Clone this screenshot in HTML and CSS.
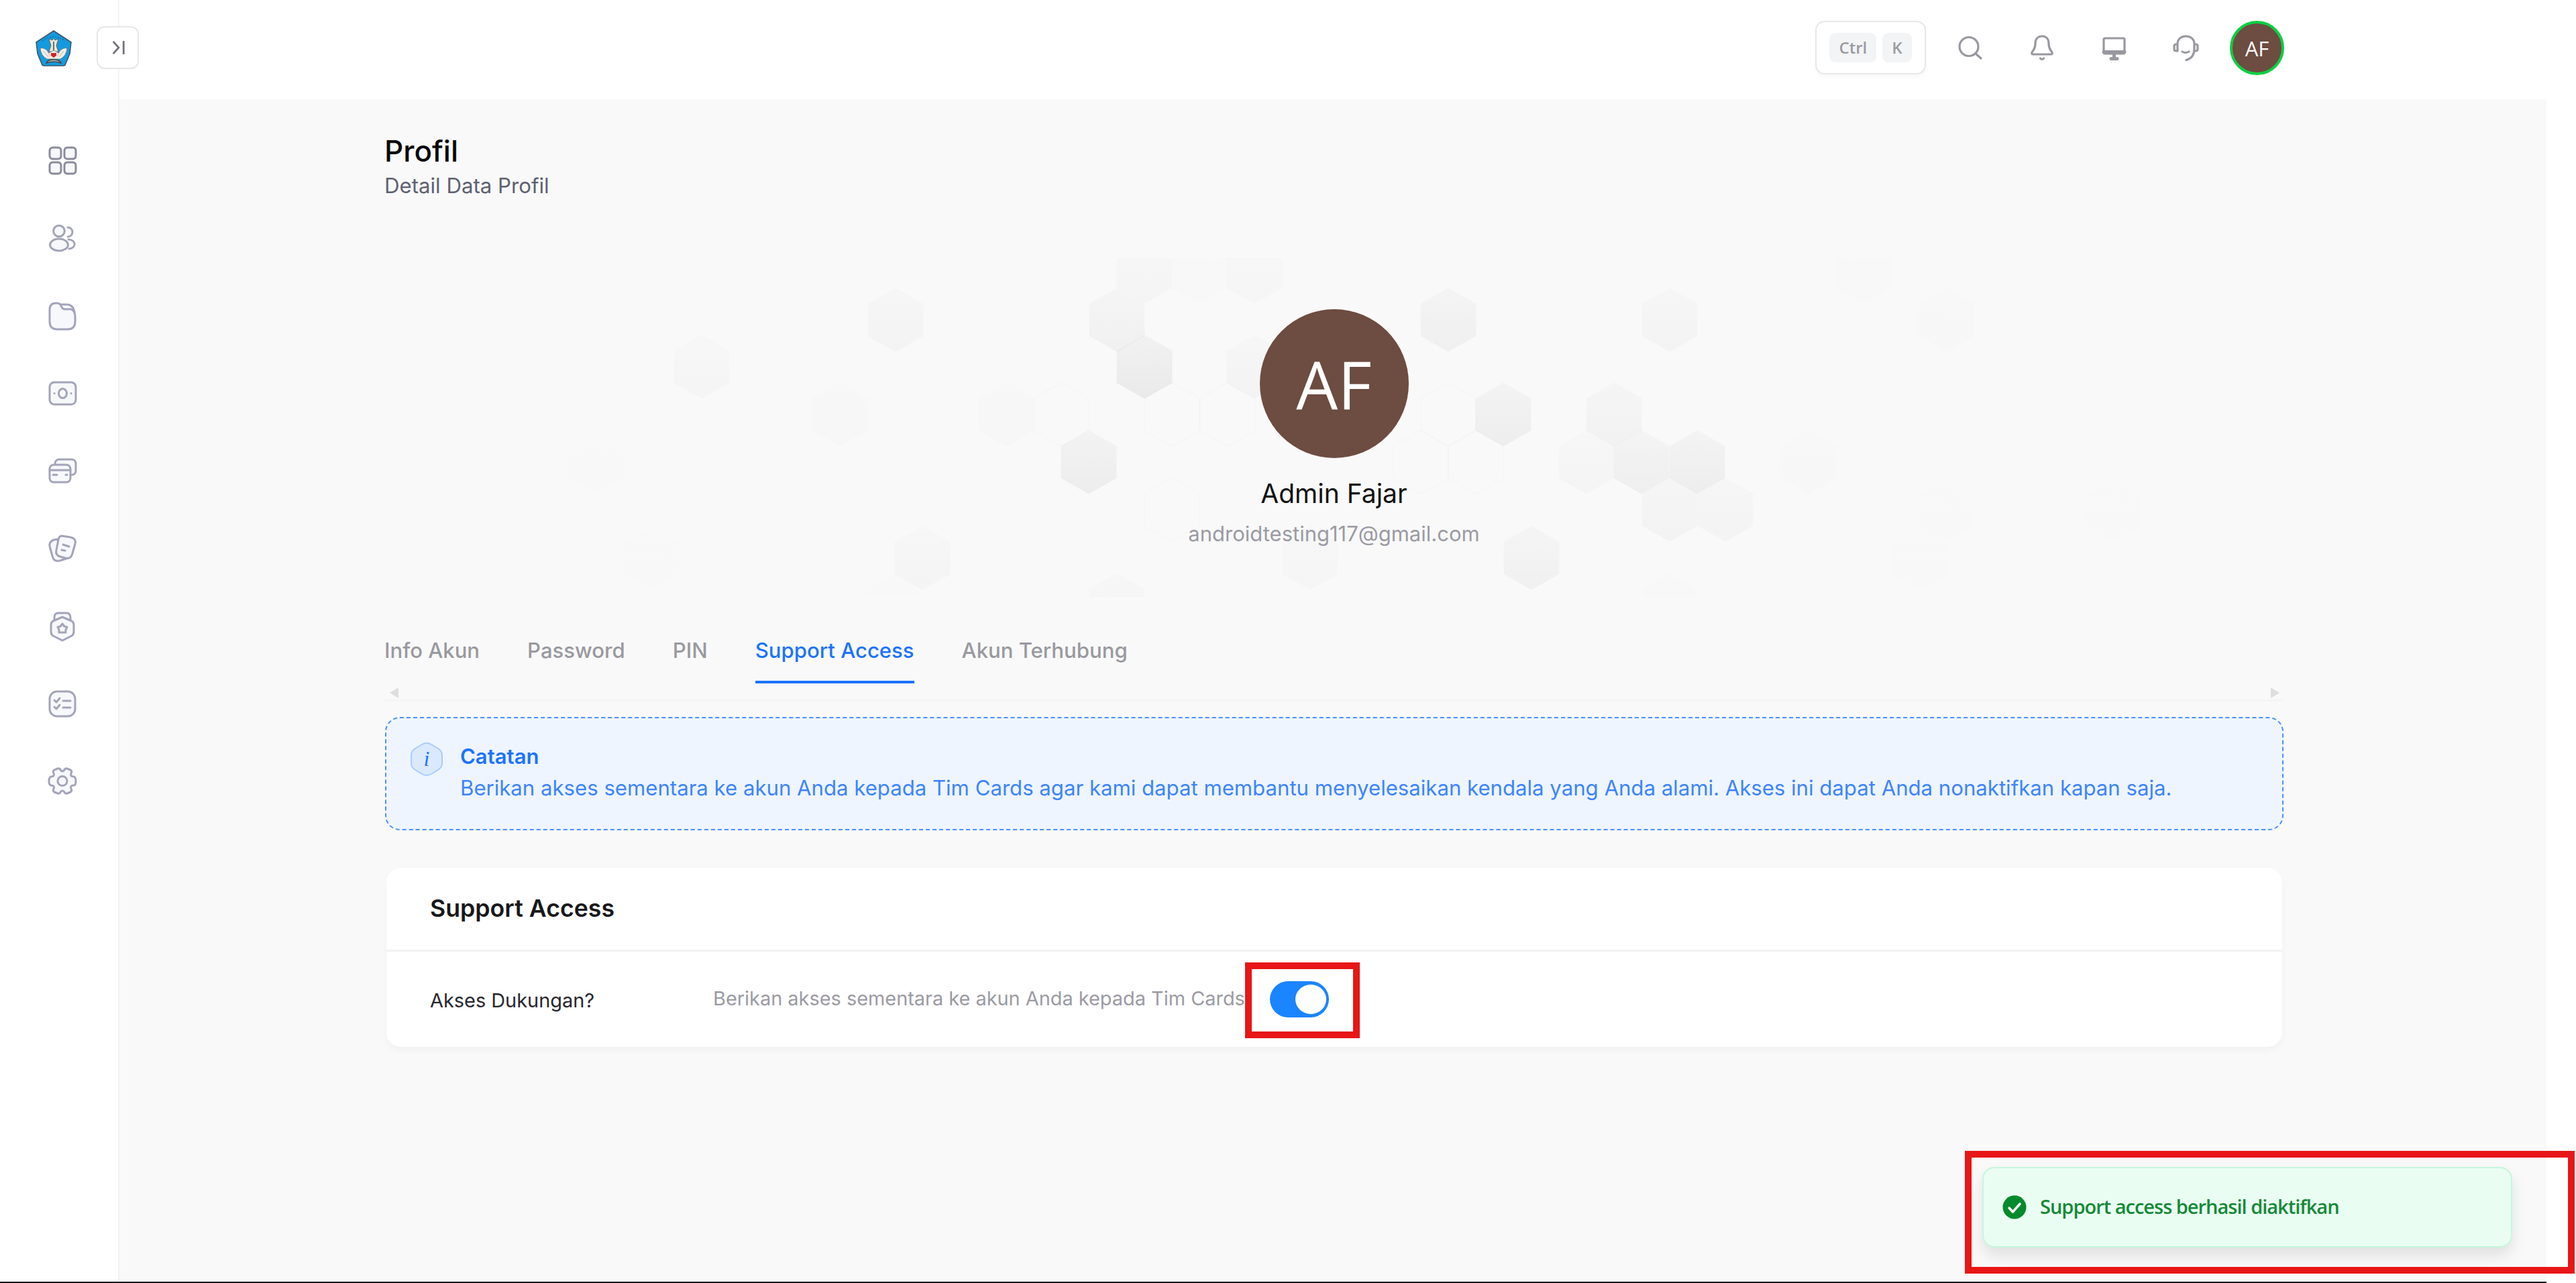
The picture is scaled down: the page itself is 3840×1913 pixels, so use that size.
FILE: index.html
```html
<!DOCTYPE html>
<html lang="id"><head><meta charset="utf-8"><title>Profil</title><link rel="stylesheet" href="styles.css"></head>
<body>
<div class="app">
<aside class="sidebar">
<div class="brand">
<svg class="logo" viewBox="0 0 54 54"><path d="M27 1 53 18 51 35 44 52Q43 53 41 53H13Q11 53 10 52L3 35 1 18Z" fill="#139bdf" stroke="#3c5668" stroke-width="1.6"/><path d="M10 16Q27 4 44 16" fill="none" stroke="#126b9e" stroke-width="1.500" stroke-dasharray="2 2"/><path d="M20 13 25 15 27 12 29 15 34 13 31 23 34 32 20 32 23 23Z" fill="#ece6d8" stroke="#555" stroke-width=".8"/><path d="M27 17V32" stroke="#444" stroke-width="1.500"/><path d="M7 27Q14 25 20 34L27 30 34 34Q40 25 47 27 46 38 37 43H17Q8 38 7 27Z" fill="#f1eee6" stroke="#777" stroke-width=".8"/><path d="M12 31 19 40M16 29 22 39M42 31 35 40M38 29 32 39" stroke="#aaa" stroke-width=".8"/><path d="M16 49Q18 44 27 44T38 49Q27 45 16 49Z" stroke="#444" fill="#b5c2c8" stroke-width="1.500"/><path d="M23 34H31V38L27 41 23 38Z" fill="#cf2429"/></svg>
</div>
<nav class="menu">
<a><svg viewBox="0 0 42 42" class="ico dark"><rect x="2" y="2" width="17" height="17" rx="4.500"/><rect x="24" y="2" width="17" height="17" rx="4.500"/><rect x="2" y="24" width="17" height="17" rx="4.500"/><rect x="24" y="24" width="17" height="17" rx="4.500"/></svg></a>
<a><svg viewBox="0 0 42 42" class="ico"><circle cx="16" cy="10.500" r="8.300"/><ellipse cx="16" cy="31" rx="13.500" ry="9"/><path class="open" d="M29 5a7 7 0 0 1 0 14M30 23c12 1 12 13 1 14"/></svg></a>
<a><svg viewBox="0 0 42 42" class="ico"><path d="M2 12Q2 2 11 2H13Q17 2 18.500 5L20 8Q21.500 11 25 11H34Q40 14 40 22V29Q40 41 29 41H13Q2 41 2 29Z"/><path class="open" d="M18 4H27Q37 4 39 15"/></svg></a>
<a><svg viewBox="0 0 42 42" class="ico"><rect x="2" y="5" width="39" height="33" rx="7"/><ellipse cx="21.500" cy="21.500" rx="6" ry="7"/><path class="open" d="M9 21.500h.1M34 21.500h.1"/></svg></a>
<a><svg viewBox="0 0 42 42" class="ico"><rect x="10" y="4" width="31" height="23" rx="6"/><rect x="2" y="12" width="31" height="26" rx="6"/><path class="open" d="M2 20H33M7 27H13M26 27H28"/></svg></a>
<a><svg viewBox="0 0 42 42" class="ico"><path d="M13 7 8 8Q1 11 2 17L6 32Q8 41 17 39L30 35Z"/><path d="M20 2 33 4Q42 6 40 14L36 28Q34 37 25 35L18 33Q10 31 12 23L15 8Q16 2 20 2Z"/><path class="open" d="M22 15 31 18M20 23 25 24"/></svg></a>
<a><svg viewBox="0 0 42 42" class="ico"><path d="M9 12V8Q9 1 15 1H27Q33 1 33 8V12"/><path d="M21 7 35 13Q38 15 38 19V28Q38 33 35 35L21 42 7 35Q4 33 4 28V19Q4 15 7 13Z"/><path d="M21 17 24 21 28 22 26 26V30H16V26L14 22 18 21Z"/></svg></a>
<a><svg viewBox="0 0 42 42" class="ico"><rect x="2" y="2" width="38" height="37" rx="11"/><path class="open" d="M9 15 12 18 17 12M9 25 12 28 17 22M22 16H33M22 26H33"/></svg></a>
<a><svg viewBox="0 0 42 42" class="ico"><path d="M14 2Q17 1 18 4 21 8 24 4 25 1 28 2L33 4Q36 6 34 9 32 14 38 14 41 15 41 21 41 27 38 27 32 27 34 32 36 35 33 37L28 39Q25 40 24 37 21 33 18 37 17 40 14 39L9 37Q6 35 8 32 10 27 4 27 1 26 1 21 1 15 4 14 10 14 8 9 6 6 9 4Z"/><circle cx="21" cy="20.500" r="7"/></svg></a>
</nav>
</aside>
<button class="toggle-side"><svg viewBox="0 0 24 24"><path d="M4 2 13 12 4 22M21 1V23"/></svg></button>
<div class="page">
<header class="topbar">
<div class="keys"><kbd>Ctrl</kbd><kbd>K</kbd></div>
<svg class="act" viewBox="0 0 40 40"><circle cx="18" cy="18.500" r="14"/><path d="M28 29 36 36"/></svg>
<svg class="act" viewBox="0 0 40 40"><path d="M20 3C13 3 10 8 10 14C10 22 8 22 5 27Q4 30 7 30H33Q36 30 35 27C32 22 30 22 30 14C30 8 27 3 20 3ZM17.500 36Q20 39 22.500 36"/></svg>
<svg class="act" viewBox="0 0 40 40"><rect x="5" y="6" width="31" height="23" rx="2"/><path d="M5 26.500H36M20.500 29V36M16 36.500H25" class="fat"/></svg>
<svg class="act" viewBox="0 0 40 40"><path d="M8 25V14C8 7 14 3 20.500 3S33 7 33 14V22Q33 35 21 38.500M8 15H6Q3 15 3 18V22Q3 25 6 25H8ZM33 15H35Q38 15 38 18V22Q38 25 35 25H33M15 26Q20 29 25 26"/></svg>
<div class="avatar small">AF</div>
</header>
<main class="content">
<div class="heading"><h1>Profil</h1><p>Detail Data Profil</p></div>
<section class="hero">
<svg class="hexes" viewBox="575 385 2830 505"><defs><path id="h" d="M0-47.500 41.300-24V24L0 47.500-41.300 24V-24Z"/><linearGradient id="g" x1="0" y1="0" x2="0" y2="1"><stop offset="0" stop-color="#999" stop-opacity=".5"/><stop offset="1" stop-color="#999"/></linearGradient></defs>
<g fill="url(#g)">
<use href="#h" x="1046" y="547" opacity=".045"/><use href="#h" x="1335" y="477" opacity=".06"/><use href="#h" x="1665" y="477" opacity=".09"/><use href="#h" x="1706" y="547" opacity=".16"/><use href="#h" x="1623" y="689" opacity=".13"/><use href="#h" x="1706" y="405" opacity=".05"/><use href="#h" x="1788" y="405" opacity=".015"/><use href="#h" x="1870" y="405" opacity=".04"/><use href="#h" x="1870" y="547" opacity=".06"/><use href="#h" x="1252" y="618" opacity=".025"/><use href="#h" x="1500" y="618" opacity=".025"/><use href="#h" x="1375" y="832" opacity=".05"/><use href="#h" x="1334" y="902" opacity=".015"/><use href="#h" x="1665" y="902" opacity=".05"/>
<use href="#h" x="2159" y="477" opacity=".1"/><use href="#h" x="2241" y="618" opacity=".12"/><use href="#h" x="2406" y="618" opacity=".08"/><use href="#h" x="2365" y="689" opacity=".05"/><use href="#h" x="2447" y="689" opacity=".11"/><use href="#h" x="2530" y="689" opacity=".12"/><use href="#h" x="2489" y="760" opacity=".07"/><use href="#h" x="2572" y="760" opacity=".06"/><use href="#h" x="2489" y="477" opacity=".06"/><use href="#h" x="2283" y="832" opacity=".09"/><use href="#h" x="1953" y="832" opacity=".04"/><use href="#h" x="2696" y="689" opacity=".02"/><use href="#h" x="2778" y="405" opacity=".015"/><use href="#h" x="2902" y="477" opacity=".02"/><use href="#h" x="2902" y="760" opacity=".01"/><use href="#h" x="2861" y="832" opacity=".01"/><use href="#h" x="2489" y="902" opacity=".02"/><use href="#h" x="3150" y="760" opacity=".01"/><use href="#h" x="888" y="689" opacity=".01"/><use href="#h" x="971" y="832" opacity=".01"/>
</g><g fill="none" stroke="#000" stroke-opacity=".012" stroke-width="2"><use href="#h" x="1582" y="618"/><use href="#h" x="1830" y="618"/><use href="#h" x="1747" y="618"/><use href="#h" x="1747" y="760"/><use href="#h" x="2159" y="618"/><use href="#h" x="2118" y="689"/><use href="#h" x="2200" y="689"/></g></svg>
<div class="avatar big">AF</div>
<h2>Admin Fajar</h2><p>androidtesting117@gmail.com</p>
</section>
<nav class="tabs"><a>Info Akun</a><a>Password</a><a>PIN</a><a class="on">Support Access</a><a>Akun Terhubung</a></nav>
<div class="scroll"><i class="left"></i><i class="right"></i></div>
<section class="note">
<svg viewBox="0 0 48 50"><path d="M17 3Q24-1 31 3L41 9Q47 13 47 19V31Q47 37 41 41L31 47Q24 51 17 47L7 41Q1 37 1 31V19Q1 13 7 9Z" fill="#dbe9fe" stroke="#a9cbff" stroke-width="2"/><text x="24" y="35" text-anchor="middle">i</text></svg>
<div><h3>Catatan</h3><p>Berikan akses sementara ke akun Anda kepada Tim Cards agar kami dapat membantu menyelesaikan kendala yang Anda alami. Akses ini dapat Anda nonaktifkan kapan saja.</p></div>
</section>
<section class="card"><h3>Support Access</h3>
<div class="row"><span class="label">Akses Dukungan?</span><span class="desc">Berikan akses sementara ke akun Anda kepada Tim Cards</span><span class="mark"><span class="switch"><b></b></span></span></div></section>
</main>
</div>
<div class="edge"></div>
</div>
<div class="bottom-line"></div>
<div class="callout"><div class="toast"><svg viewBox="0 0 36 36"><circle cx="18" cy="18" r="17.500" fill="#048a2c"/><path d="M10 19 15.500 25 26 13" fill="none" stroke="#fff" stroke-width="3.500" stroke-linecap="round" stroke-linejoin="round"/></svg><span>Support access berhasil diaktifkan</span></div></div>
</body></html>
```
FILE: styles.css
```css
*{box-sizing:border-box}
body{margin:0;height:1913px;overflow:hidden;background:#fff;font-family:Inter,"Liberation Sans",sans-serif}
h1,h2,h3,p{margin:0}
.app{display:flex;height:1913px;position:relative}
.sidebar{width:178px;border-right:2px solid #f3f3f3;display:flex;flex-direction:column}
.brand{height:148px;padding:45px 0 0 53px}
.logo{width:54px;height:54px;display:block}
.menu{display:flex;flex-direction:column;align-items:center;gap:73.800px;padding:70px 0 0 10px}
.menu a{height:42px}
.ico{width:42px;height:42px;display:block;overflow:visible;fill:#f6f8fb;stroke:#a3a4ba;stroke-width:3;stroke-linecap:round;stroke-linejoin:round}
.ico.dark{stroke:#8b8b9c}
.ico .open{fill:none}
.toggle-side{position:absolute;left:144px;top:39px;width:63px;height:64px;border:2px solid #e7e7e9;border-radius:12px;background:#fff;padding:0;display:flex;align-items:center;justify-content:center}
.toggle-side svg{width:22px;height:22px;fill:none;stroke:#71717a;stroke-width:3}
.page{flex:1;background:#f9f9f9;min-width:0}
.edge{width:44px}
.topbar{height:148px;background:#fff;display:flex;align-items:flex-start;padding:31px 391px 0 0;justify-content:flex-end}
.keys{width:165px;height:80px;border:2px solid #e8e8ea;border-radius:14px;display:flex;align-items:center;justify-content:center;gap:9px;box-shadow:0 4px 6px rgba(0,0,0,.03);margin-right:46px}
kbd{height:44px;padding:0 14px;border-radius:9px;background:#f3f4f5;color:#9a9aa3;font:600 24px/43px "Open Sans",sans-serif}
.act{width:40px;height:40px;margin:20px 67px 0 0;fill:none;stroke:#98989f;stroke-width:3.200;stroke-linecap:round;stroke-linejoin:round}
.act .fat{stroke-width:5}
.act:nth-of-type(4){margin-right:46px}
.avatar{background:#6d4c41;color:#fff;border-radius:50%;display:flex;align-items:center;justify-content:center;font-family:"Open Sans",sans-serif}
.small{width:81px;height:81px;border:4px solid #0bcf43;font-size:31px}
.big{width:222px;height:222px;font-size:98px;position:relative}
.content{padding:50px 392px 0 395px}
.heading{height:187px}
h1{font-size:44px;line-height:54px;font-weight:500;color:#09090b}
.heading p{font-size:31.200px;line-height:51px;color:#5d6172}
.hero{height:505px;position:relative;display:flex;flex-direction:column;align-items:center;padding-top:76px}
.hexes{position:absolute;left:2px;top:0;width:2830px;height:505px}
.hero h2,.hero p{position:relative}
.hero h2{font-size:39px;line-height:50px;font-weight:400;color:#111;margin-top:28px}
.hero p{font-size:31px;line-height:50px;color:#9b9ba3;margin-top:10px}
.tabs{margin-top:44px;height:85px;display:flex;gap:71px;font-size:31.100px;font-weight:500;color:#99999f}
.tabs a{line-height:73px;height:85px}
.tabs .on{color:#1b73ff;border-bottom:4px solid #1b73ff}
.scroll{height:27px;display:flex;justify-content:space-between;padding:6px 6px 0 8px;border-bottom:3px solid #f5f5f5}
.scroll i{width:13px;height:16px;background:#dedede}
.left{clip-path:polygon(100% 0,100% 100%,0 50%)}
.right{clip-path:polygon(0 0,0 100%,100% 50%)}
.note{margin:23px 0 0 1px;height:169px;border:2px dashed #4a90ff;border-radius:22px;background:#eef5ff;padding:36px 0 0 36px;display:flex;color:#1b73ff}
.note svg{width:48px;height:50px;flex:none}
.note text{font:italic 500 32px "Liberation Serif",serif;fill:#1b73ff}
.note div{padding-left:26px;white-space:nowrap}
.note h3{font-size:31px;line-height:46px;font-weight:600;margin-top:-2px}
.note p{font-size:31.150px;line-height:49px;color:#3d84ff}
.card{margin:56px 2px 0 3px;height:267px;background:#fff;border-radius:22px;box-shadow:0 5px 12px rgba(0,0,0,.035)}
.card h3{height:125px;border-bottom:3px solid #f2f2f2;padding-left:65px;font-size:35.700px;line-height:121px;font-weight:600;color:#18181b}
.row{display:flex;padding:16px 0 0 65px;font-size:28.900px}
.label{width:422px;line-height:114px;color:#27272f}
.desc{width:793px;line-height:108px;white-space:nowrap;color:#9b9ba3}
.mark{width:171px;height:113px;border:10px solid #e81616;position:relative;padding:18px 0 0 27px}
.switch{display:block;width:88px;height:54px;border-radius:27px;background:#1b84ff;padding:5px 3px 0 38px}
.switch b{display:block;width:46px;height:44px;border-radius:50%;background:#fff}
.bottom-line{position:absolute;left:0;top:1911px;width:3796px;height:2px;background:#18191b}
.callout{position:absolute;left:2929px;top:1716px;width:909px;height:183px;border:10px solid #e81616;padding:14px 0 0 16px}
.toast{width:790px;height:120px;border:2px solid #c5f7da;border-radius:18px;background:#eafdf3;box-shadow:0 12px 22px rgba(0,0,0,.1);display:flex;align-items:center;padding-left:28px;gap:20px;color:#138a36;font:600 29px "Open Sans",sans-serif;letter-spacing:-1px}
.toast svg{width:36px;height:36px}
.toast span{margin-top:-3px}
```
